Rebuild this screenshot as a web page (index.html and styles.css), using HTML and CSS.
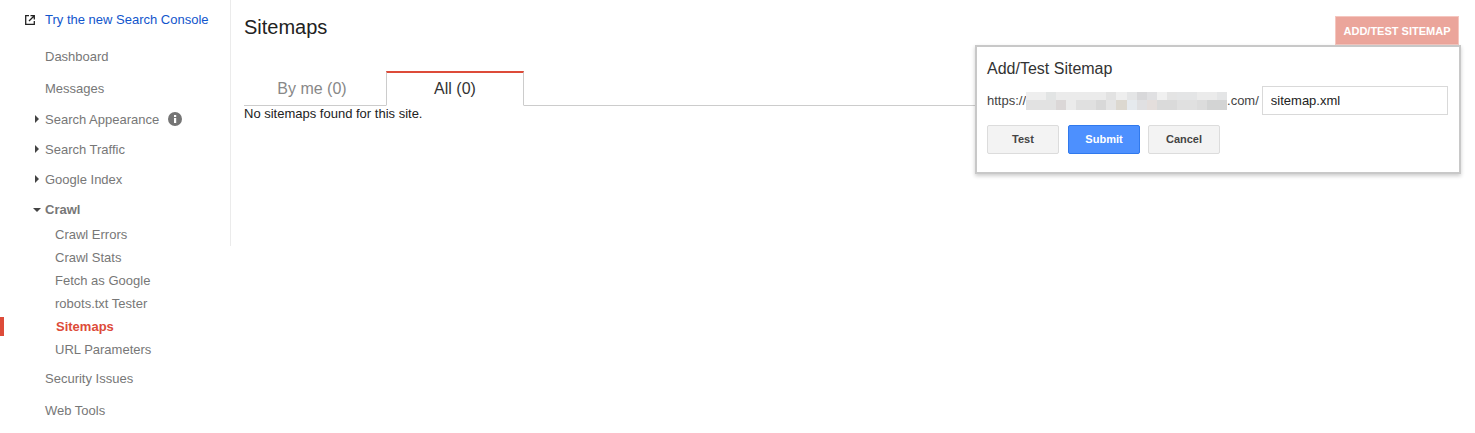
FILE: index.html
```html
<!DOCTYPE html>
<html lang="en">
<head>
  <meta charset="UTF-8" />
  <title>Sitemaps</title>
  <link rel="stylesheet" href="styles.css">
</head>
<body>
  <div class="page">
    <nav class="sidebar">
      <a class="try-link" href="#">
        <svg class="ext-icon" width="10" height="10" viewBox="0 0 10 10"><path d="M4 .7H.7v8.600h8.600V6" fill="none" stroke="#222" stroke-width="1.300"/><path d="M5.500 .7h3.800v3.800M9.300 .7L4 6" fill="none" stroke="#222" stroke-width="1.300"/></svg>
        Try the new Search Console
      </a>
      <a class="item item-plain first" href="#">Dashboard</a>
      <a class="item item-plain msgs" href="#">Messages</a>
      <a class="item arrow-right appearance" href="#">Search Appearance
        <svg class="info" width="14" height="14" viewBox="0 0 14 14"><circle cx="7" cy="7" r="7" fill="#757575"/><rect x="6" y="6" width="2.200" height="5" fill="#fff"/><rect x="6" y="3" width="2.200" height="2" fill="#fff"/></svg>
      </a>
      <a class="item arrow-right" href="#">Search Traffic</a>
      <a class="item arrow-right" href="#">Google Index</a>
      <a class="item arrow-down bold" href="#">Crawl</a>
      <ul class="subnav">
        <li><a href="#">Crawl Errors</a></li>
        <li><a href="#">Crawl Stats</a></li>
        <li><a href="#">Fetch as Google</a></li>
        <li><a href="#">robots.txt Tester</a></li>
        <li class="active"><a href="#">Sitemaps</a></li>
        <li><a href="#">URL Parameters</a></li>
      </ul>
      <a class="item item-plain security" href="#">Security Issues</a>
      <a class="item item-plain tools" href="#">Web Tools</a>
    </nav>

    <main class="content">
      <div class="top-row">
        <h1>Sitemaps</h1>
        <button class="btn-add">ADD/TEST SITEMAP</button>
      </div>
      <div class="tabs">
        <a class="tab" href="#">By me (0)</a>
        <a class="tab tab-active" href="#">All (0)</a>
      </div>
      <p class="empty">No sitemaps found for this site.</p>

      <div class="popup">
        <h2>Add/Test Sitemap</h2>
        <div class="url-row">
          <span>https://</span>
          <svg class="blur" width="201" height="18" viewBox="0 0 20 18" preserveAspectRatio="none" shape-rendering="crispEdges">
            <rect width="20" height="18" fill="#e4e5e6"/>
            <rect x="0" y="0" width="2" height="8" fill="#eeeeee"/>
            <rect x="2" y="0" width="1" height="8" fill="#e2e4e4"/>
            <rect x="3" y="0" width="5" height="8" fill="#ebebeb"/>
            <rect x="8" y="0" width="1" height="8" fill="#e2e2e2"/>
            <rect x="9" y="0" width="1" height="8" fill="#eeeeee"/>
            <rect x="11" y="0" width="1" height="8" fill="#d8d8da"/>
            <rect x="12" y="0" width="1" height="8" fill="#e0e0e2"/>
            <rect x="13" y="0" width="1" height="8" fill="#f0f0f0"/>
            <rect x="14" y="0" width="1" height="8" fill="#e4e4e4"/>
            <rect x="17" y="0" width="2" height="8" fill="#ebebeb"/>
            <rect x="0" y="8" width="3" height="10" fill="#e2e2e2"/>
            <rect x="3" y="8" width="1" height="10" fill="#dbd7d7"/>
            <rect x="4" y="8" width="1" height="10" fill="#ebebeb"/>
            <rect x="5" y="8" width="2" height="10" fill="#e0e0e0"/>
            <rect x="7" y="8" width="1" height="10" fill="#d8d8d8"/>
            <rect x="8" y="8" width="1" height="10" fill="#e4e4e4"/>
            <rect x="9" y="8" width="1" height="10" fill="#dcd8d0"/>
            <rect x="10" y="8" width="1" height="10" fill="#e6eaee"/>
            <rect x="11" y="8" width="1" height="10" fill="#e0e0e2"/>
            <rect x="12" y="8" width="1" height="10" fill="#e4dedc"/>
            <rect x="13" y="8" width="2" height="10" fill="#dadada"/>
            <rect x="15" y="8" width="2" height="10" fill="#e0e0e0"/>
            <rect x="17" y="8" width="1" height="10" fill="#dcdcdc"/>
            <rect x="18" y="8" width="2" height="10" fill="#d3d4d4"/>
          </svg>
          <span>.com/</span>
          <input class="url-input" type="text" value="sitemap.xml">
        </div>
        <div class="actions">
          <button class="btn">Test</button>
          <button class="btn btn-blue">Submit</button>
          <button class="btn">Cancel</button>
        </div>
      </div>
    </main>
  </div>
</body>
</html>
```

FILE: styles.css
```css
* {
  margin: 0;
  padding: 0;
  box-sizing: border-box;
}

body {
  font-family: 'Liberation Sans', Arial, sans-serif;
  font-size: 13px;
  background: #fff;
  color: #222;
  overflow: hidden;
}

a {
  text-decoration: none;
}

.page {
  display: flex;
  align-items: flex-start;
  height: 433px;
}

/* sidebar */
.sidebar {
  width: 231px;
  height: 246px;
  flex-shrink: 0;
  border-right: 1px solid #ebebeb;
  padding-top: 11px;
}

.try-link {
  display: flex;
  align-items: center;
  height: 16px;
  padding-left: 25px;
  color: #1155cc;
  white-space: nowrap;
}

.ext-icon {
  margin-right: 10px;
  margin-top: 1px;
}

.item {
  display: flex;
  align-items: center;
  height: 16px;
  margin-top: 14px;
  padding-left: 45px;
  color: #777;
  position: relative;
  white-space: nowrap;
}

.first {
  margin-top: 21px;
}

.msgs {
  margin-top: 16px;
}

.appearance {
  margin-top: 15px;
}

.bold {
  font-weight: bold;
}

.info {
  margin-left: 9px;
}

.arrow-right::before {
  content: "";
  position: absolute;
  left: 35px;
  top: 4px;
  border-left: 4px solid #444;
  border-top: 4px solid transparent;
  border-bottom: 4px solid transparent;
}

.arrow-down::before {
  content: "";
  position: absolute;
  left: 33px;
  top: 7px;
  border-top: 4px solid #444;
  border-left: 4px solid transparent;
  border-right: 4px solid transparent;
}

.subnav {
  list-style: none;
  margin-top: 6px;
}

.subnav li {
  height: 23px;
  line-height: 23px;
  padding-left: 55px;
  position: relative;
}

.subnav a {
  color: #777;
}

.subnav .active {
  padding-left: 56px;
}

.subnav .active a {
  color: #dd4b39;
  font-weight: bold;
}

.subnav .active::before {
  content: "";
  position: absolute;
  left: 0;
  top: 2px;
  width: 4px;
  height: 19px;
  background: #dd4b39;
}

.security {
  margin-top: 9px;
}

.tools {
  margin-top: 16px;
}

/* main area */
.content {
  flex: 1;
  position: relative;
  padding: 0 16px 0 13px;
}

.top-row {
  display: flex;
  justify-content: space-between;
  align-items: flex-start;
  height: 71px;
  padding-top: 16px;
}

h1 {
  font-size: 20px;
  font-weight: normal;
  line-height: 23px;
  color: #222;
}

.btn-add {
  width: 124px;
  height: 29px;
  background: #eba59b;
  border: 1px solid #f5c6bf;
  outline: none;
  color: #fff;
  font-family: inherit;
  font-size: 11px;
  font-weight: bold;
}

.tabs {
  display: flex;
  height: 35px;
  border-bottom: 1px solid #ccc;
}

.tab {
  width: 142px;
  height: 35px;
  padding-right: 6px;
  text-align: center;
  font-size: 16px;
  line-height: 36px;
  color: #888;
}

.tab-active {
  width: 138px;
  height: 35px;
  padding-right: 0;
  background: #fff;
  color: #333;
  border: 1px solid #ccc;
  border-top: 2px solid #dd4b39;
  border-bottom: 1px solid #fff;
  line-height: 32px;
}

.empty {
  font-size: 13px;
  line-height: 15px;
  color: #222;
}

/* add sitemap popup */
.popup {
  position: absolute;
  left: 744px;
  top: 45px;
  width: 486px;
  height: 129px;
  background: #fff;
  border: 2px solid #c8c8c8;
  box-shadow: 0 2px 4px rgba(0,0,0,0.2);
  padding: 12px 10px;
}

.popup h2 {
  font-size: 16px;
  font-weight: normal;
  line-height: 20px;
  color: #333;
}

.url-row {
  display: flex;
  align-items: center;
  margin-top: 7px;
  color: #444;
}

.blur {
  display: block;
}

.url-input {
  width: 186px;
  height: 29px;
  margin-left: 3px;
  border: 1px solid #d9d9d9;
  padding-left: 8px;
  font-family: inherit;
  font-size: 13px;
  color: #222;
  outline: none;
}

.actions {
  display: flex;
  gap: 8px;
  margin-top: 10px;
}

.btn {
  width: 72px;
  height: 29px;
  padding-bottom: 2px;
  border: 1px solid #dcdcdc;
  border-radius: 2px;
  background: #f3f3f3;
  font-family: inherit;
  font-size: 11px;
  font-weight: bold;
  color: #444;
}

.btn-blue {
  margin-left: 1px;
  background: #4d90fe;
  border-color: #3079ed;
  color: #fff;
}
```
